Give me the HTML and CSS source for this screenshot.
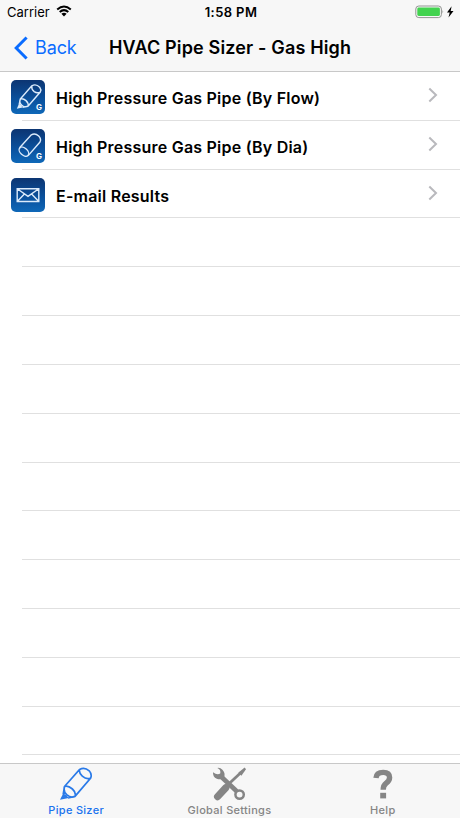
FILE: index.html
```html
<!DOCTYPE html>
<html lang="en">
<head>
    <meta charset="utf-8">
    <title>HVAC Pipe Sizer - Gas High</title>
    <link rel="stylesheet" href="styles.css">
</head>
<body>
    <header>
        <div class="status">
            <div class="carrier">
                <span>Carrier</span>
                <svg class="wifi" width="16" height="12" viewBox="0 0 16 12">
                    <path d="M1.2 4.4Q8-1.5 14.8 4.4M3.7 7Q8 3.2 12.3 7" fill="none" stroke="#000" stroke-width="2"/>
                    <path d="M5.4 8.8Q8 6.7 10.6 8.8L8 11.5Z"/>
                </svg>
            </div>
            <span class="time">1:58 PM</span>
            <svg class="battery" width="40" height="14" viewBox="0 0 40 14">
                <rect x="0.8" y="1" width="25.6" height="11.6" rx="3" fill="none" stroke="#929492"/>
                <rect x="2.3" y="2.6" width="22.6" height="8.4" rx="1.4" fill="#42d34f"/>
                <path d="M27.5 5q1.5 1.6 0 3.6z" fill="#929492"/>
                <path d="M36.6 1.2L32 7.5h2.7L33.5 12.6 38.5 5.9h-2.8z"/>
            </svg>
        </div>
        <nav class="navbar">
            <a class="back">
                <svg width="15" height="24" viewBox="0 0 15 24"><path d="M12.6 1.5L2.2 12l10.4 10.5" fill="none" stroke="#0a6cff" stroke-width="3"/></svg>
                <span>Back</span>
            </a>
            <h1>HVAC Pipe Sizer - Gas High</h1>
        </nav>
    </header>

    <ul class="list">
        <li>
            <div class="icon">
                <svg width="34" height="34" viewBox="0 0 34 34">
                    <path d="M9.3 19L20.8 5.8Q25 3.4 28.7 7.2Q30.6 9.6 29.3 12L17 26.2M20.8 5.8Q20.2 9.2 23.2 11.6Q26.2 13.8 29.3 12M9.3 19Q7.8 22.6 10.8 25.2Q14 28 17 26.2Q17.8 23 15 20.6Q12 18 9.3 19M9.3 19L8.2 24.5M17 26.2L11.5 27.4"/>
                    <path class="tip" d="M8 23.8L5.8 28.8L11.6 27.6Q10.5 25 8 23.8Z"/>
                </svg>
                <b>G</b>
            </div>
            <span class="label">High Pressure Gas Pipe (By Flow)</span>
            <svg class="arrow" width="10" height="16" viewBox="0 0 10 16"><path d="M1.3 1.5L8 8l-6.7 6.5"/></svg>
        </li>
        <li>
            <div class="icon">
                <svg width="34" height="34" viewBox="0 0 34 34">
                    <path d="M8.6 18.8L20.3 5.9Q24 3.7 27.7 7.1Q30.6 10.2 29 13L17.2 26.6"/>
                    <ellipse cx="12.9" cy="22.7" rx="5.6" ry="3.5" transform="rotate(42 12.9 22.7)"/>
                </svg>
                <b>G</b>
            </div>
            <span class="label">High Pressure Gas Pipe (By Dia)</span>
            <svg class="arrow" width="10" height="16" viewBox="0 0 10 16"><path d="M1.3 1.5L8 8l-6.7 6.5"/></svg>
        </li>
        <li>
            <div class="icon">
                <svg width="34" height="34" viewBox="0 0 34 34">
                    <path d="M6.2 10.7H27.8V23.5H6.2ZM6.2 10.7L17 18.4L27.8 10.7M6.2 23.5L13.4 16M27.8 23.5L20.6 16"/>
                </svg>
            </div>
            <span class="label">E-mail Results</span>
            <svg class="arrow" width="10" height="16" viewBox="0 0 10 16"><path d="M1.3 1.5L8 8l-6.7 6.5"/></svg>
        </li>
        <li></li>
        <li></li>
        <li></li>
        <li></li>
        <li></li>
        <li></li>
        <li></li>
        <li></li>
        <li></li>
        <li></li>
        <li></li>
    </ul>

    <footer>
        <a class="tab active">
            <svg width="34" height="36" viewBox="0 0 34 36">
                <g fill="none" stroke="#2a7ae8" stroke-width="1.7">
                    <path d="M5.5 20.5L20.6 3.4Q25.5 0.6 30.2 4.8Q33.2 8.2 31.7 12L16 30.4M20.6 3.4Q19.7 7 23.3 10.2Q27.5 13.8 31.7 12M5.5 20.5Q4 25.2 7.7 28.7Q12 32.4 16 30.4Q17.4 26.6 13.4 23Q9 19.2 5.5 20.5M5.5 20.5L4.2 28.5M16 30.4L9 32"/>
                </g>
                <path d="M4.2 27.4L1 33.8L9.7 32Q8 28.5 4.2 27.4Z" fill="#2a7ae8"/>
            </svg>
            <span>Pipe Sizer</span>
        </a>
        <a class="tab">
            <svg width="34" height="36" viewBox="0 0 34 36">
                <g fill="none" stroke="#858585">
                    <path d="M8.5 10L26 26.5" stroke-width="4.6"/>
                    <circle cx="27.6" cy="28.6" r="4.2" stroke-width="2.5" fill="#f7f7f7"/>
                    <path d="M5.4 1.9Q9.2 3.8 8.2 7.6Q5 9.4 1 6.2Q0.6 11 4.8 12.8Q9 14.4 12.2 11.5Q13.6 7 10.4 3.7Q8.3 1.5 5.4 1.9Z" fill="#858585" stroke="none"/>
                    <path d="M13.8 21.7L5.6 30.6" stroke-width="7.2" stroke-linecap="round"/>
                    <path d="M14 20.5L29 6.5" stroke-width="2.8"/>
                </g>
                <path d="M26.3 6.8L32.6 1.6L34 3.2L29.4 9.7Z" fill="#858585"/>
            </svg>
            <span>Global Settings</span>
        </a>
        <a class="tab">
            <svg width="34" height="36" viewBox="0 0 34 36">
                <path d="M10 12Q10.4 6.4 17.2 6.4Q23.6 6.4 23.6 11.6Q23.6 14.8 20.1 17.2Q17.2 19.3 17.2 23.8" fill="none" stroke="#858585" stroke-width="5.4"/>
                <rect x="14.2" y="26.8" width="5.9" height="5.6" fill="#858585"/>
            </svg>
            <span>Help</span>
        </a>
    </footer>
</body>
</html>
```

FILE: styles.css
```css
* {
    box-sizing: border-box;
}
body {
    margin: 0;
    height: 818px;
    display: flex;
    flex-direction: column;
    overflow: hidden;
    background: #fff;
    color: #000;
    font-family: Inter, "Liberation Sans", sans-serif;
}
svg {
    display: block;
    flex: none;
}
header {
    height: 72px;
    flex: none;
    background: #f7f7f7;
    border-bottom: 1px solid #c8c8c8;
}
.status {
    display: grid;
    grid-template-columns: 1fr auto 1fr;
    align-items: center;
    height: 24px;
    padding: 0 5px 0 7px;
    font-size: 13px;
}
.carrier {
    display: flex;
    align-items: center;
    gap: 6px;
}
.wifi {
    margin-bottom: 2px;
}
.time {
    font-weight: 600;
    letter-spacing: 0.4px;
}
.battery {
    justify-self: end;
}
.navbar {
    display: grid;
    grid-template-columns: 109px auto;
    align-items: center;
    height: 47px;
}
.back {
    display: flex;
    align-items: center;
    gap: 6px;
    padding-left: 14px;
    color: #0a6cff;
    font-size: 18px;
    letter-spacing: -0.1px;
}
h1 {
    margin: 0;
    font-size: 18px;
    font-weight: 600;
    letter-spacing: 0.15px;
    white-space: nowrap;
}
.list {
    flex: 1;
    min-height: 0;
    margin: 0;
    padding: 0;
    list-style: none;
    overflow: hidden;
}
.list li {
    display: flex;
    align-items: center;
    height: 48.82px;
    padding: 0 22px 0 11px;
    background: linear-gradient(#e0e0e0, #e0e0e0) 22px 100% / 100% 1px no-repeat;
}
.icon {
    position: relative;
    width: 34px;
    height: 34px;
    margin-top: 2px;
    border-radius: 5px;
    background: linear-gradient(#0c3572, #0a529f 60%, #0f68b8);
}
.icon svg {
    fill: none;
    stroke: #dcebfb;
    stroke-width: 1.4;
}
.icon .tip {
    fill: #dcebfb;
    stroke: none;
}
.icon b {
    position: absolute;
    right: 3px;
    bottom: 3px;
    color: #fff;
    font-size: 8px;
    line-height: 8px;
}
.label {
    flex: 1;
    margin: 4px 0 0 11px;
    font-size: 16px;
    font-weight: 600;
    letter-spacing: 0.22px;
}
.arrow {
    margin-bottom: 2px;
}
.arrow path {
    fill: none;
    stroke: #b9b9bd;
    stroke-width: 2;
}
footer {
    display: grid;
    grid-template-columns: repeat(3, 1fr);
    height: 55px;
    flex: none;
    background: #f7f7f7;
    border-top: 1px solid #c8c8c8;
}
.tab {
    display: flex;
    flex-direction: column;
    align-items: center;
    padding: 2px 1px 0 0;
    color: #858585;
    font-size: 11px;
    font-weight: 500;
    line-height: 16px;
    letter-spacing: 0.3px;
}
.active {
    color: #1a73ee;
}
```
